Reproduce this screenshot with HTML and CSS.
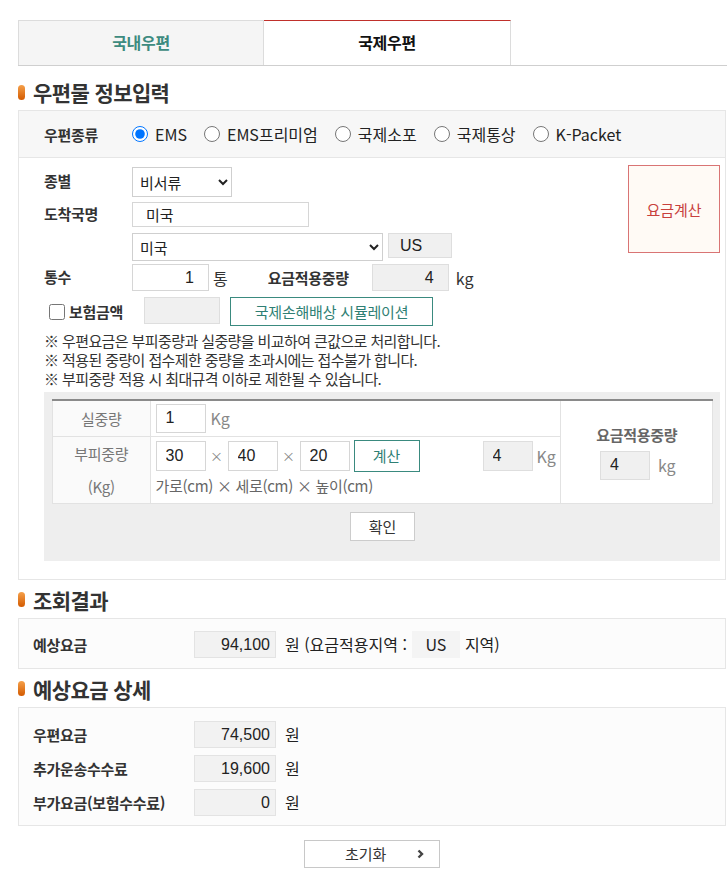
FILE: index.html
```html
<!DOCTYPE html>
<html lang="ko">
<head>
<meta charset="utf-8">
<title>국제우편 요금조회</title>
<link rel="stylesheet" href="styles.css">
</head>
<body>
<div class="wrap">
  <div class="tabs">
    <div class="tab tab-off">국내우편</div>
    <div class="tab tab-on">국제우편</div>
  </div>

  <h2 class="sec-title"><span class="bullet"></span>우편물 정보입력</h2>
  <div class="panel">
    <div class="type-row">
      <span class="row-label">우편종류</span>
      <label class="radio"><input type="radio" name="ptype" checked>EMS</label>
      <label class="radio"><input type="radio" name="ptype">EMS프리미엄</label>
      <label class="radio"><input type="radio" name="ptype">국제소포</label>
      <label class="radio"><input type="radio" name="ptype">국제통상</label>
      <label class="radio"><input type="radio" name="ptype">K-Packet</label>
    </div>
    <div class="form-body">
      <div class="form-top">
        <div class="fields">
          <div class="frow r1">
            <span class="flabel">종별</span>
            <select class="sel sel-kind"><option>비서류</option></select>
          </div>
          <div class="frow r2">
            <span class="flabel">도착국명</span>
            <input class="inp inp-country" value="미국">
          </div>
          <div class="frow r3">
            <span class="flabel"></span>
            <select class="sel sel-country"><option>미국</option></select>
            <input class="inp ro code-box" value="US" readonly>
          </div>
          <div class="frow r4">
            <span class="flabel">통수</span>
            <input class="inp num inp-count" value="1">
            <span class="unit-tong">통</span>
            <span class="flabel2">요금적용중량</span>
            <input class="inp num ro inp-weight" value="4" readonly>
            <span class="unit-kg">kg</span>
          </div>
          <div class="frow r5">
            <label class="chk"><input type="checkbox">보험금액</label>
            <input class="inp ro inp-ins" readonly>
            <button class="btn-teal btn-sim" type="button">국제손해배상 시뮬레이션</button>
          </div>
        </div>
        <button class="btn-calc" type="button">요금계산</button>
      </div>
      <ul class="notes">
        <li>※ 우편요금은 부피중량과 실중량을 비교하여 큰값으로 처리합니다.</li>
        <li>※ 적용된 중량이 접수제한 중량을 초과시에는 접수불가 합니다.</li>
        <li>※ 부피중량 적용 시 최대규격 이하로 제한될 수 있습니다.</li>
      </ul>
      <div class="calc-box">
        <table class="calc">
          <tr class="row-real">
            <td class="lbl">실중량</td>
            <td class="mid">
              <div class="line">
                <input class="inp cinp" value="1">
                <span class="kg-gray">Kg</span>
              </div>
            </td>
            <td class="rt" rowspan="2">
              <div class="rt-title">요금적용중량</div>
              <div class="rt-line">
                <input class="inp cinp ro" value="4" readonly>
                <span class="kg-gray kg-rt">kg</span>
              </div>
            </td>
          </tr>
          <tr class="row-vol">
            <td class="lbl lbl-vol">부피중량<br>(Kg)</td>
            <td class="mid mid-vol">
              <div class="dim-line">
                <input class="inp cinp" value="30">
                <span class="times">×</span>
                <input class="inp cinp" value="40">
                <span class="times">×</span>
                <input class="inp cinp" value="20">
                <button class="btn-teal btn-small" type="button">계산</button>
                <input class="inp cinp ro vol-result" value="4" readonly>
                <span class="kg-gray kg-vol">Kg</span>
              </div>
              <div class="dim-hint">가로(cm) × 세로(cm) × 높이(cm)</div>
            </td>
          </tr>
        </table>
        <div class="confirm-row"><button class="btn-white" type="button">확인</button></div>
      </div>
    </div>
  </div>

  <h2 class="sec-title"><span class="bullet"></span>조회결과</h2>
  <div class="result-panel res-summary">
    <div class="res-row">
      <span class="res-label">예상요금</span>
      <span class="amt">94,100</span>
      <span class="won">원 (요금적용지역 :</span>
      <span class="zone">US</span>
      <span class="zone-tail">지역)</span>
    </div>
  </div>

  <h2 class="sec-title"><span class="bullet"></span>예상요금 상세</h2>
  <div class="result-panel res-detail">
    <div class="res-row">
      <span class="res-label">우편요금</span>
      <span class="amt">74,500</span>
      <span class="won">원</span>
    </div>
    <div class="res-row">
      <span class="res-label">추가운송수수료</span>
      <span class="amt">19,600</span>
      <span class="won">원</span>
    </div>
    <div class="res-row">
      <span class="res-label">부가요금(보험수수료)</span>
      <span class="amt">0</span>
      <span class="won">원</span>
    </div>
  </div>

  <button class="btn-reset" type="button">초기화<svg class="chev" width="7" height="10" viewBox="0 0 7 10"><path d="M1.5 1.5 L5 5 L1.5 8.5" fill="none" stroke="#444" stroke-width="2.4"/></svg></button>
</div>
</body>
</html>
```

FILE: styles.css
```css
* { box-sizing: border-box; }

body {
  margin: 0;
  background: #fff;
  color: #333;
  font-family: "Noto Sans CJK KR", "Noto Sans", sans-serif;
}

.wrap {
  padding: 20px 0 4px 18px;
}

/* tabs */
.tabs {
  display: flex;
  height: 46px;
  border-bottom: 1px solid #cfcfcf;
}
.tab {
  display: flex;
  align-items: center;
  justify-content: center;
  padding-bottom: 2px;
  font-size: 16px;
  font-weight: 700;
  letter-spacing: -0.3px;
}
.tab-off {
  width: 246px;
  background: #f5f5f5;
  border: 1px solid #dcdcdc;
  border-bottom: none;
  color: #3d8b80;
}
.tab-on {
  width: 247px;
  background: #fff;
  border-top: 1px solid #c0302b;
  border-right: 1px solid #dcdcdc;
  color: #111;
}

/* section title */
.sec-title {
  display: flex;
  align-items: center;
  gap: 8px;
  height: 30px;
  margin: 5px 0 3px;
  font-size: 21px;
  line-height: 28px;
  font-weight: 700;
  color: #333;
  letter-spacing: -0.6px;
}
.tabs + .sec-title { margin-top: 11px; }
.bullet {
  width: 7px;
  height: 15px;
  border-radius: 4px;
  background: linear-gradient(#f5a04a, #d35a00);
}

/* panel */
.panel {
  width: 708px;
  border: 1px solid #e6e6e6;
}
.type-row {
  display: flex;
  align-items: center;
  height: 47px;
  padding-left: 25px;
  background: #f7f7f7;
  border-bottom: 1px solid #e6e6e6;
}
.row-label {
  width: 88px;
  font-size: 15px;
  font-weight: 700;
  letter-spacing: -0.3px;
}
.radio {
  display: flex;
  align-items: center;
  margin-right: 17px;
  font-size: 16px;
  color: #222;
}
.radio input {
  width: 16px;
  height: 16px;
  margin: 0 7px 0 0;
}

.form-body {
  padding: 0 5px 18px 25px;
}
.form-top {
  display: flex;
  align-items: flex-start;
}
.fields {
  flex: 1;
  padding-top: 9px;
}
.frow {
  display: flex;
  align-items: center;
}
.r1 { height: 30px; }
.r2 { height: 25px; margin-top: 5px; }
.r3 { height: 28px; margin-top: 6px; align-items: flex-start; }
.r4 { height: 27px; margin-top: 3px; }
.r5 { height: 29px; margin-top: 6px; }

.flabel {
  width: 88px;
  font-size: 15px;
  font-weight: 700;
  letter-spacing: -0.3px;
  margin-top: -3px;
}
.flabel2 {
  width: 104px;
  margin-left: 40px;
  font-size: 15px;
  font-weight: 700;
  letter-spacing: -0.3px;
}

.inp {
  height: 100%;
  border: 1px solid #d6d6d6;
  border-radius: 0;
  background: #fff;
  color: #222;
  font-family: "Liberation Sans", "Noto Sans CJK KR", sans-serif;
  font-size: 15px;
  padding: 0 0 0 9px;
  outline: none;
}
.ro {
  background: #f0f0f0;
  border-color: #dedede;
}
.num {
  text-align: right;
  padding: 0 14px 0 0;
  font-size: 16px;
}
.sel {
  border: 1px solid #cfcfcf;
  border-radius: 0;
  background: #fff;
  color: #222;
  font-family: "Noto Sans CJK KR", sans-serif;
  font-size: 15px;
  padding-left: 3px;
}
.sel-kind { width: 100px; height: 30px; }
.sel-country { width: 251px; height: 28px; }
.inp-country { width: 177px; padding-left: 13px; }
.code-box { width: 64px; height: 25px; margin-left: 5px; padding-left: 11px; font-size: 16px; }
.inp-count { width: 77px; }
.unit-tong { margin-left: 4px; font-size: 16px; }
.inp-weight { width: 77px; }
.unit-kg { margin-left: 7px; font-size: 16px; }

.chk {
  display: flex;
  align-items: center;
  width: 95px;
  margin-left: 5px;
  font-size: 15px;
  font-weight: 700;
  letter-spacing: -0.3px;
}
.chk input {
  width: 16px;
  height: 16px;
  margin: 0 4px 0 0;
}
.inp-ins { width: 76px; height: 27px; align-self: flex-start; }

.btn-teal {
  background: #fff;
  border: 1px solid #3a8a7f;
  color: #2f7f74;
  font-family: "Noto Sans CJK KR", sans-serif;
  font-size: 15px;
  padding: 0;
}
.btn-sim {
  width: 203px;
  height: 29px;
  margin-left: 10px;
  letter-spacing: -0.2px;
}

.btn-calc {
  width: 92px;
  height: 88px;
  margin-top: 7px;
  background: #fffaf5;
  border: 1px solid #d97474;
  color: #c8403c;
  font-family: "Noto Sans CJK KR", sans-serif;
  font-size: 15px;
  padding: 0;
}

.notes {
  list-style: none;
  margin: 5px 0 4px;
  padding: 0;
  font-size: 15px;
  line-height: 19px;
  color: #333;
  letter-spacing: -0.6px;
}

/* weight calc box */
.calc-box {
  background: #eeeeee;
  padding: 7px 7px 20px 8px;
}
.calc {
  width: 661px;
  border-collapse: collapse;
  background: #fff;
  border-top: 2px solid #8a8a8a;
}
.calc td {
  border: 1px solid #e2e2e2;
  padding: 0;
}
.calc tr:first-child td { border-top: 2px solid #8a8a8a; }
.row-real td { height: 36px; }
.row-vol td { height: 67px; }
.lbl {
  width: 98px;
  background: #fafafa;
  color: #777;
  font-size: 15px;
  text-align: center;
  letter-spacing: -0.3px;
}
.lbl-vol { line-height: 33px; }
.mid { width: 411px; padding-left: 5px !important; }
.mid-vol { vertical-align: top; padding-top: 3px !important; }
.line {
  display: flex;
  align-items: center;
  height: 29px;
}
.cinp {
  width: 50px;
  height: 29px;
  font-size: 16px;
  padding-left: 9px;
}
.kg-gray {
  margin-left: 5px;
  color: #888;
  font-size: 16px;
}
.kg-vol { margin-left: 4px; }
.dim-line {
  display: flex;
  align-items: center;
  height: 32px;
}
.dim-line .cinp { height: 30px; }
.times {
  width: 22px;
  text-align: center;
  color: #888;
  font-size: 13px;
}
.btn-small {
  width: 66px;
  height: 32px;
  margin-left: 4px;
}
.vol-result { margin-left: 63px; }
.dim-hint {
  line-height: 28px;
  color: #666;
  font-size: 15px;
  letter-spacing: -0.3px;
}
.rt {
  width: 152px;
  text-align: center;
  vertical-align: middle;
}
.rt-title {
  color: #666;
  font-size: 15px;
  font-weight: 700;
  line-height: 22px;
  letter-spacing: -0.3px;
}
.rt-line {
  display: flex;
  justify-content: center;
  align-items: center;
  margin-top: 5px;
  padding-left: 2px;
}
.kg-rt { margin-left: 8px; }

.confirm-row {
  display: flex;
  justify-content: center;
  margin-top: 8px;
}
.btn-white {
  width: 65px;
  height: 29px;
  background: #fff;
  border: 1px solid #cccccc;
  color: #333;
  font-family: "Noto Sans CJK KR", sans-serif;
  font-size: 15px;
  padding: 0;
}

/* results */
.result-panel {
  width: 708px;
  border: 1px solid #e6e6e6;
  background: #fcfcfc;
  padding: 12px 0 10px 14px;
}
.res-detail { padding: 13px 0 9px 14px; }
.res-row {
  display: flex;
  align-items: center;
  height: 27px;
}
.res-row + .res-row { margin-top: 7px; }
.res-label {
  width: 161px;
  font-size: 15px;
  font-weight: 700;
  letter-spacing: -0.3px;
}
.amt {
  width: 82px;
  height: 27px;
  line-height: 25px;
  background: #f2f2f2;
  border: 1px solid #e3e3e3;
  text-align: right;
  padding-right: 5px;
  font-family: "Liberation Sans", sans-serif;
  font-size: 16px;
  color: #222;
}
.won {
  margin-left: 9px;
  font-size: 16px;
  color: #222;
}
.zone {
  width: 48px;
  height: 27px;
  line-height: 27px;
  margin-left: 5px;
  background: #f4f4f4;
  text-align: center;
  font-size: 16px;
  color: #222;
}
.zone-tail {
  margin-left: 5px;
  font-size: 16px;
  color: #222;
}

.btn-reset {
  display: flex;
  align-items: center;
  width: 136px;
  height: 28px;
  margin: 14px 0 0 286px;
  padding: 0 0 0 40px;
  background: #fff;
  border: 1px solid #c8c8c8;
  color: #333;
  font-family: "Noto Sans CJK KR", sans-serif;
  font-size: 15px;
}
.chev { margin-left: 31px; }
```
